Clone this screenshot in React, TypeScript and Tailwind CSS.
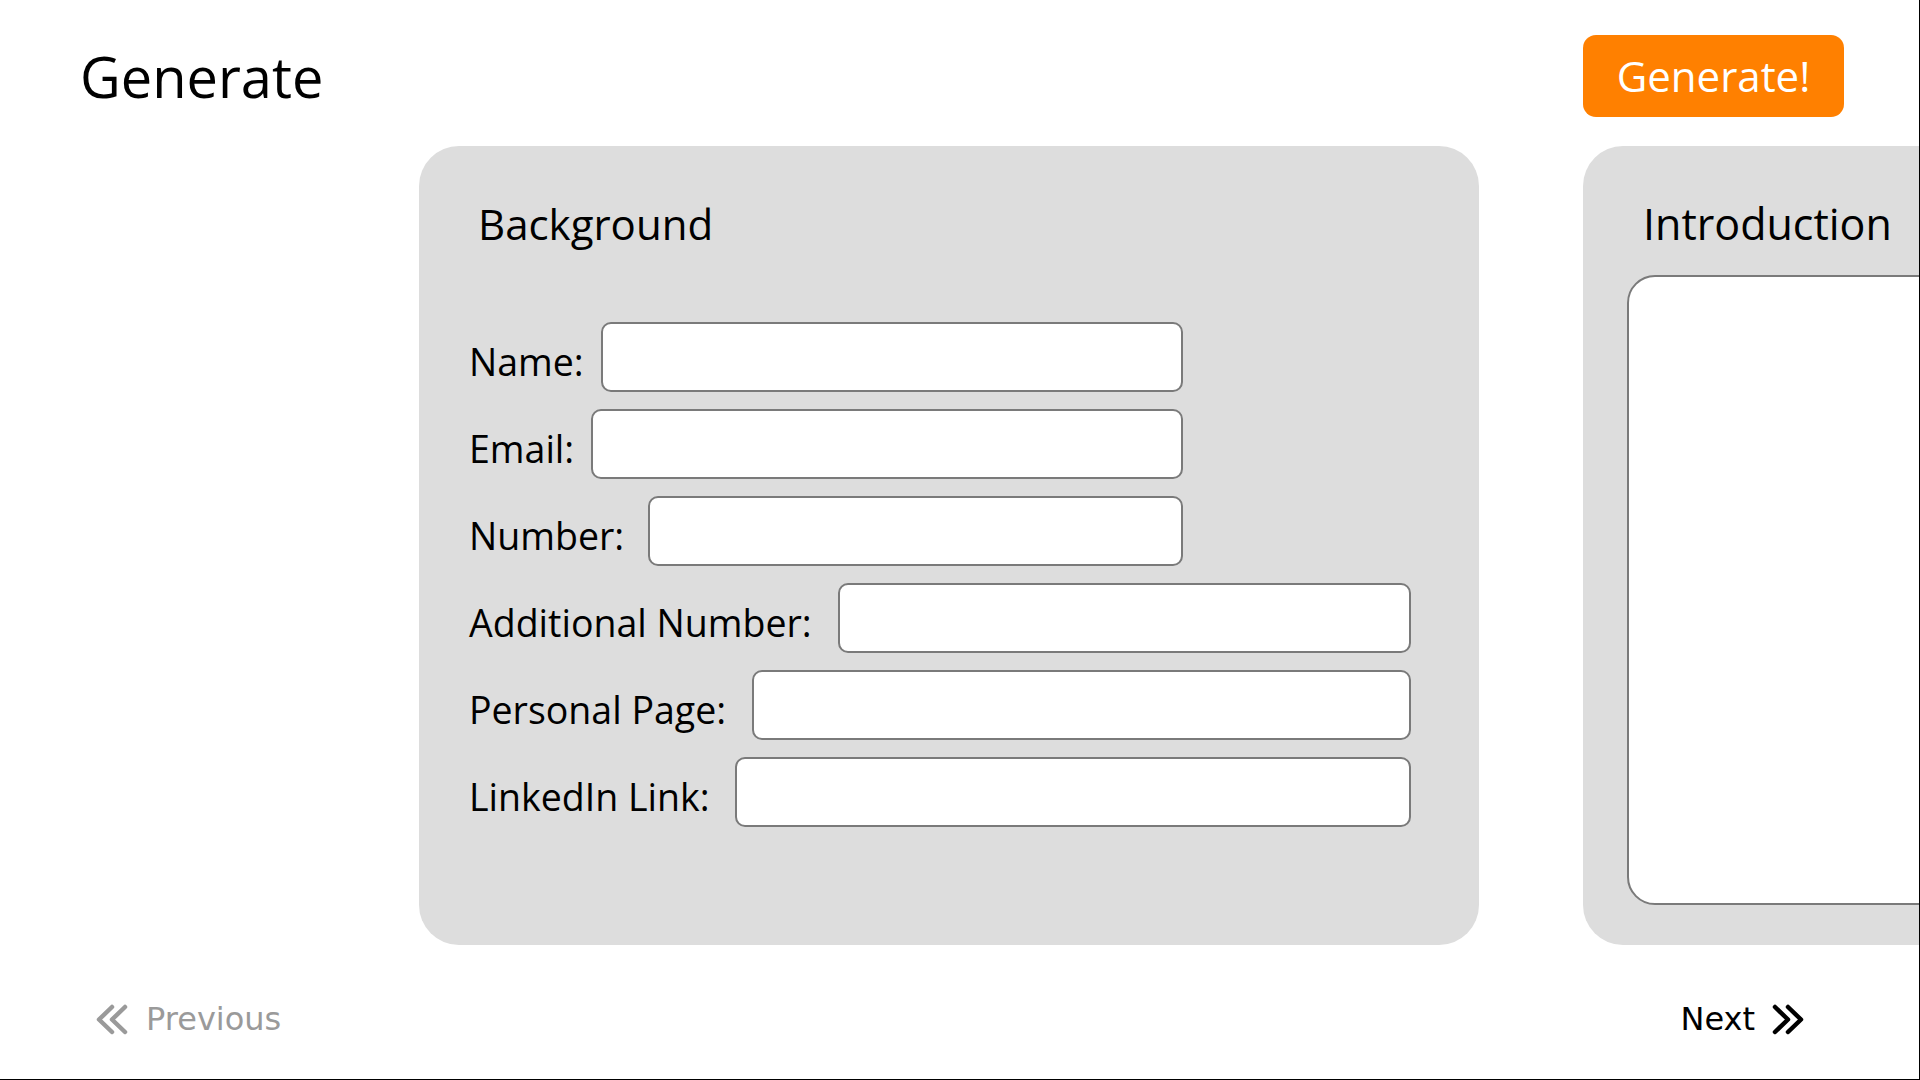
import React from 'react';

const topFields = [
  { label: 'Name:', width: 'w-[132px]' },
  { label: 'Email:', width: 'w-[122px]' },
  { label: 'Number:', width: 'w-[179px]' },
];

const bottomFields = [
  { label: 'Additional Number:', width: 'w-[369px]' },
  { label: 'Personal Page:', width: 'w-[283px]' },
  { label: 'LinkedIn Link:', width: 'w-[266px]' },
];

const DoubleChevron = ({ dir, color }: { dir: 'left' | 'right'; color: string }) => (
  <svg width="32" height="31" viewBox="0 0 32 31" fill="none" stroke={color} strokeWidth="4.5" strokeLinecap="round" strokeLinejoin="round">
    {dir === 'left' ? (
      <>
        <path d="M16 3 L3 15.5 L16 28" />
        <path d="M29 3 L16 15.5 L29 28" />
      </>
    ) : (
      <>
        <path d="M3 3 L16 15.5 L3 28" />
        <path d="M16 3 L29 15.5 L16 28" />
      </>
    )}
  </svg>
);

const Field = ({ label, width }: { label: string; width: string }) => (
  <div className="flex items-center h-[70px]">
    <label className={`${width} shrink-0 mt-[10px] text-[37.5px] leading-[50px] text-black`}>{label}</label>
    <input
      type="text"
      className="flex-1 min-w-0 h-[70px] bg-white border-2 border-[#7a7a7a] rounded-[10px] outline-none px-3"
    />
  </div>
);

export default function App() {
  return (
    <div
      className="w-[1920px] h-[1080px] bg-white border-r border-b border-black overflow-hidden flex flex-col"
      style={{ fontFamily: '"Open Sans", "Noto Sans", sans-serif' }}
    >
      {/* Header */}
      <header className="flex items-center justify-between h-[82px] mt-[35px] pl-[80px] pr-[75px] shrink-0">
        <h1 className="text-[56px] leading-[64px] font-normal text-black">Generate</h1>
        <button className="w-[261px] h-[82px] rounded-[13px] bg-[#ff8000] text-white text-[42px] leading-[50px] flex items-center justify-center">
          Generate!
        </button>
      </header>

      {/* Panels */}
      <div className="flex gap-[104px] pl-[419px] mt-[29px] shrink-0">
        {/* Background */}
        <section className="w-[1060px] h-[799px] shrink-0 bg-[#dddddd] rounded-[40px] pt-[54px] pl-[50px]">
          <h2 className="ml-[9px] text-[42px] leading-[48px] font-normal text-black">Background</h2>
          <div className="mt-[74px] flex flex-col gap-[17px]">
            <div className="w-[714px] flex flex-col gap-[17px]">
              {topFields.map((f) => (
                <Field key={f.label} label={f.label} width={f.width} />
              ))}
            </div>
            <div className="w-[942px] flex flex-col gap-[17px]">
              {bottomFields.map((f) => (
                <Field key={f.label} label={f.label} width={f.width} />
              ))}
            </div>
          </div>
        </section>

        {/* Introduction */}
        <section className="w-[1060px] h-[799px] shrink-0 bg-[#dddddd] rounded-[40px] pt-[54px] pl-[44px] pr-[44px]">
          <h2 className="ml-[16px] text-[43px] leading-[48px] font-normal text-black">Introduction</h2>
          <textarea className="mt-[27px] block w-full h-[630px] bg-white border-2 border-[#7a7a7a] rounded-[28px] outline-none resize-none p-4" />
        </section>
      </div>

      {/* Footer */}
      <footer
        className="flex items-center justify-between h-[60px] mt-[44px] pl-[96px] pr-[115px] shrink-0"
        style={{ fontFamily: '"DejaVu Sans", sans-serif' }}
      >
        <button className="flex items-center gap-[18px] text-[32px] text-[#9a9a9a]">
          <DoubleChevron dir="left" color="#9a9a9a" />
          <span>Previous</span>
        </button>
        <button className="flex items-center gap-[17px] text-[32px] text-black">
          <span>Next</span>
          <DoubleChevron dir="right" color="#000000" />
        </button>
      </footer>
    </div>
  );
}
